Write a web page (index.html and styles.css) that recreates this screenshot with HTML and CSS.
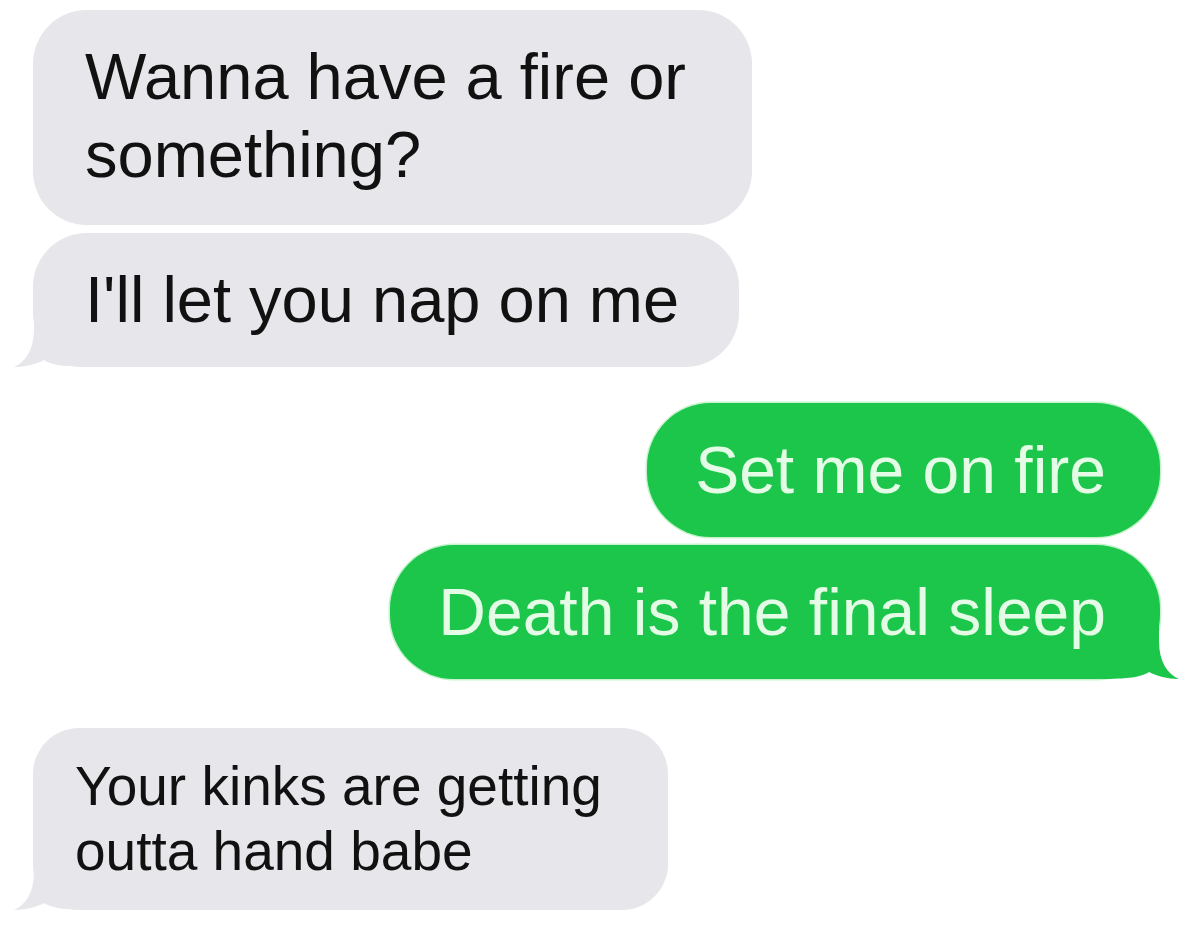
FILE: index.html
```html
<!DOCTYPE html>
<html lang="en">
<head>
<meta charset="utf-8">
<title>Messages</title>
<link rel="stylesheet" href="styles.css">
</head>
<body>
<main class="thread">
  <div class="group in">
    <p class="bubble gray two"><span class="text">Wanna have a fire or<br>something?</span></p>
    <p class="bubble gray"><svg class="tail tail-left" viewBox="0 0 80 56" width="80" height="56" aria-hidden="true"><path d="M20,0 L20,18 C20,38 12,51 0,56 C12,56 22,53 30,49 C38,54 50,56 80,56 L80,0 Z"/></svg><span class="text">I'll let you nap on me</span></p>
  </div>
  <div class="group out">
    <p class="bubble green"><span class="text">Set me on fire</span></p>
    <p class="bubble green"><svg class="tail tail-right" viewBox="0 0 80 56" width="80" height="56" aria-hidden="true"><path d="M20,0 L20,18 C20,38 12,51 0,56 C12,56 22,53 30,49 C38,54 50,56 80,56 L80,0 Z"/></svg><span class="text">Death is the final sleep</span></p>
  </div>
  <div class="group in late">
    <p class="bubble gray small"><svg class="tail tail-left" viewBox="0 0 80 56" width="80" height="56" aria-hidden="true"><path d="M20,0 L20,18 C20,38 12,51 0,56 C12,56 22,53 30,49 C38,54 50,56 80,56 L80,0 Z"/></svg><span class="text">Your kinks are getting<br>outta hand babe</span></p>
  </div>
</main>
</body>
</html>
```
FILE: styles.css
```css
html, body {
  margin: 0;
  padding: 0;
  background: #ffffff;
}

body {
  width: 1200px;
  height: 940px;
  overflow: hidden;
  font-family: "Liberation Sans", Arial, Helvetica, sans-serif;
}

.thread {
  display: flex;
  flex-direction: column;
  padding: 10px 40px 0 33px;
}

.group {
  display: flex;
  flex-direction: column;
  gap: 8px;
}

.group.in {
  align-items: flex-start;
}

.group.out {
  align-items: flex-end;
  margin-top: 36px;
}

.group.late {
  margin-top: 49px;
}

.bubble {
  position: relative;
  margin: 0;
  font-size: 65px;
  line-height: 78px;
  white-space: nowrap;
}

.text {
  position: relative;
  z-index: 1;
}

.bubble.gray {
  background: #e6e6eb;
  color: #111111;
  padding: 28px 60px 28px 52px;
  border-radius: 54px;
}

.bubble.gray.two {
  padding-right: 66px;
  padding-bottom: 31px;
}

.bubble.gray.small {
  font-size: 55px;
  line-height: 65px;
  padding: 26px 66px 26px 42px;
  border-radius: 46px;
}

.bubble.green {
  background: #1bc64a;
  color: #e4fbe6;
  font-size: 66px;
  padding: 28px 54px 28px 48px;
  border-radius: 64px;
  box-shadow: 0 0 0 1.5px #c6f3cd;
}

.tail {
  position: absolute;
  bottom: 0;
  display: block;
  z-index: 0;
}

.gray .tail path {
  fill: #e6e6eb;
}

.green .tail path {
  fill: #1bc64a;
}

.tail-left {
  left: -19px;
}

.tail-right {
  right: -19px;
  transform: scaleX(-1);
}
```
